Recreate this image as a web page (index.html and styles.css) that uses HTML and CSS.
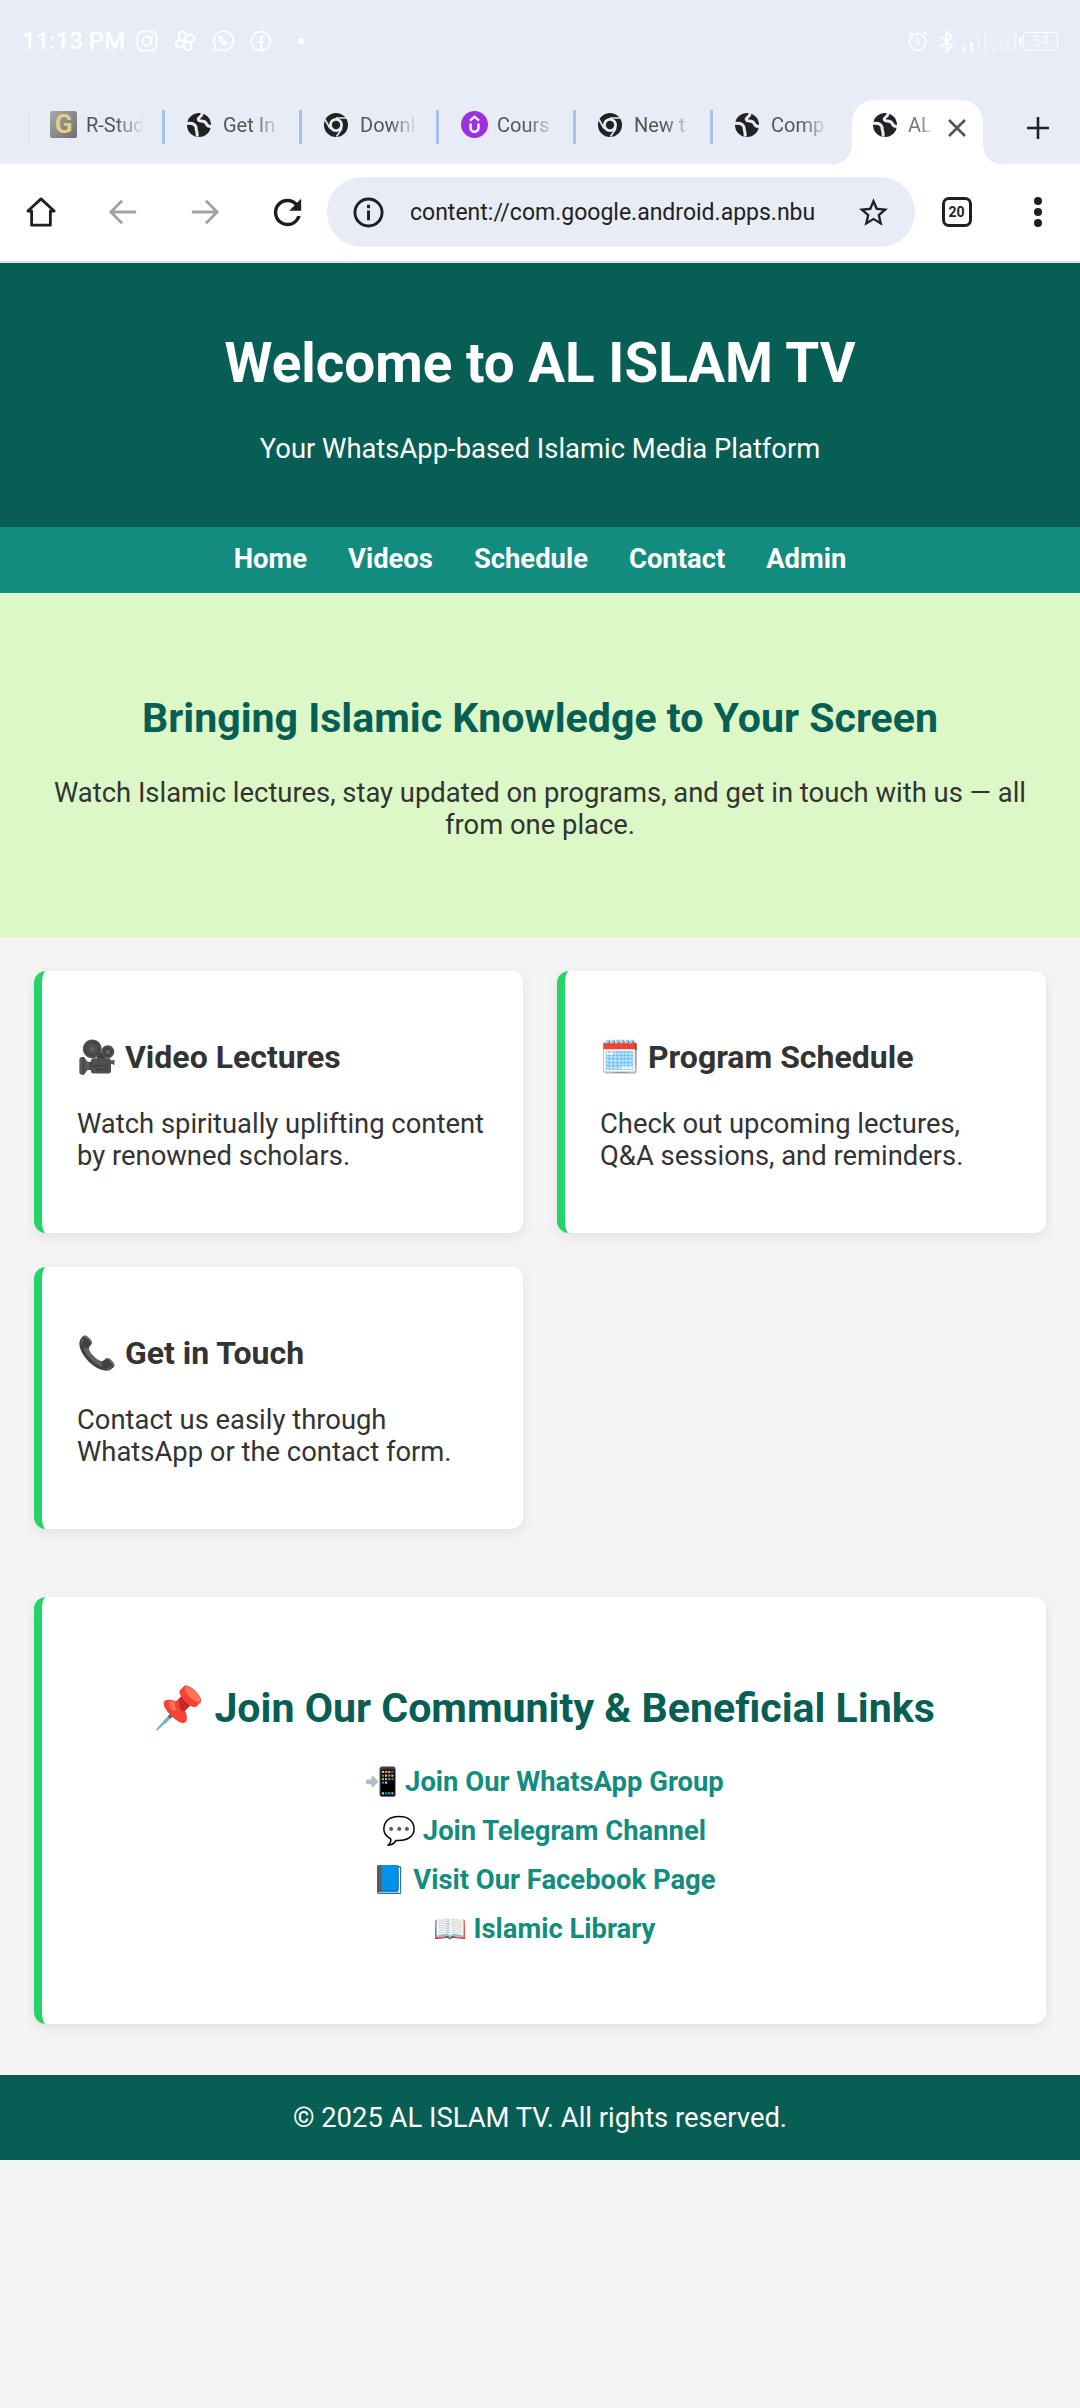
FILE: index.html
```html
<!DOCTYPE html>
<html lang="en">
<head>
  <meta charset="UTF-8">
  <title>AL ISLAM TV</title>
  <link rel="stylesheet" href="styles.css">
</head>
<body>
  <svg class="defs" width="0" height="0">
    <symbol id="globe" viewBox="0 0 24 24">
      <circle cx="12" cy="12" r="12" fill="#222"/>
      <path fill="none" stroke="#e8ecf6" stroke-width="3" d="M0 10.500c4-.8 7 .2 8.500 2.500 1.200 2 .2 2.500 1 4.500.5 1.500 1 3 .5 6M15 0c.5 2.500-1.500 3.500-3 4.800-1.500 1.400-.5 3.200 2 3.200 3 0 4.800 1 5.500 3 .6 1.800 1.500 2.500 4.500 2.500"/>
    </symbol>
    <symbol id="chrome" viewBox="0 0 24 24">
      <circle cx="12" cy="12" r="12" fill="#222"/>
      <circle cx="12" cy="12" r="7" fill="#e8ecf6"/>
      <circle cx="12" cy="12" r="4.200" fill="#222"/>
      <path d="M12 5h10.500M6 15.500L1 6.500M18 15.500l-5.500 8" stroke="#e8ecf6" stroke-width="1.600" fill="none"/>
    </symbol>
  </svg>

  <div class="statusbar">
    <div class="status-group">
      <span class="time">11:13 PM</span>
      <svg class="status-icon" viewBox="0 0 24 24" fill="none" stroke="#fff" stroke-width="1.800"><rect x="1.500" y="1.500" width="21" height="21" rx="5.500"/><circle cx="12" cy="12" r="5"/><circle cx="18" cy="6" r="1" fill="#fff" stroke="none"/></svg>
      <svg class="status-icon" viewBox="0 0 24 24" fill="none" stroke="#fff" stroke-width="2.200"><path d="M12 12C8 12 5 10 5 6.500 5 3 8 1 10.500 2c2.500 1 3 5 1.500 10zM12 12c0-4 2-7 5.500-7C21 5 23 8 22 10.500c-1 2.500-5 3-10 1.500zM12 12c4 0 7 2 7 5.500 0 3.500-3 5.500-5.500 4.500-2.500-1-3-5-1.500-10zM12 12c0 4-2 7-5.500 7C3 19 1 16 2 13.500c1-2.500 5-3 10-1.500z"/></svg>
      <svg class="status-icon" viewBox="0 0 24 24" fill="none" stroke="#fff" stroke-width="1.800"><path d="M2 22.500l1.600-5.600A10.500 10.500 0 1 1 7.500 20.800z"/><path stroke-width="2" d="M8.500 7.500c-1 1-.8 3 1.200 5.300 2 2.200 4.200 3.400 5.800 2.500l1-1.300-2.200-1.500-1 .8c-1.200-.5-2.300-1.600-2.900-3l.9-.9-1-2.300z"/></svg>
      <svg class="status-icon" viewBox="0 0 24 24" fill="none" stroke="#fff" stroke-width="1.800"><circle cx="12" cy="12" r="10.500"/><path stroke-width="2.200" d="M16 7h-1.500c-1.500 0-2.300.9-2.300 2.300V22M9 13h6"/></svg>
      <span class="status-dot"></span>
    </div>
    <div class="status-group status-right">
      <svg class="status-icon alarm" viewBox="0 0 24 24" fill="none" stroke="#fff" stroke-width="1.800"><circle cx="12" cy="13" r="9"/><path d="M12 8v5.500l3 2M2 5l4-3M22 5l-4-3"/></svg>
      <svg class="bt" viewBox="0 0 16 24" fill="none" stroke="#fff" stroke-width="2"><path d="M2 6.500l12 10.500-6 5.500V1.500l6 5.500L2 17.500"/></svg>
      <div class="signal">
        <span class="bar b1 on"></span><span class="bar b2 on"></span><span class="bar b3"></span><span class="bar b4"></span>
      </div>
      <div class="signal second">
        <span class="bar b1"></span><span class="bar b2"></span><span class="bar b3"></span><span class="bar b4"></span>
      </div>
      <div class="battery"><span>54</span></div>
    </div>
  </div>

  <div class="tabstrip">
    <div class="tab first">
      <span class="fav-g">G</span>
      <span class="tab-title">R-Stud</span>
    </div>
    <div class="tab">
      <svg class="fav"><use href="#globe"/></svg>
      <span class="tab-title">Get In</span>
    </div>
    <div class="tab">
      <svg class="fav"><use href="#chrome"/></svg>
      <span class="tab-title">Downl</span>
    </div>
    <div class="tab">
      <svg class="fav fav-u" viewBox="0 0 24 24">
        <circle cx="12" cy="12" r="12" fill="#9b30e0"/>
        <path d="M8 8.500L12 5l4 3.500" fill="none" stroke="#fff" stroke-width="2"/>
        <path d="M8.500 11v4a3.500 3.500 0 0 0 7 0v-4" fill="none" stroke="#fff" stroke-width="2.200"/>
      </svg>
      <span class="tab-title">Cours</span>
    </div>
    <div class="tab">
      <svg class="fav"><use href="#chrome"/></svg>
      <span class="tab-title">New t</span>
    </div>
    <div class="tab last">
      <svg class="fav"><use href="#globe"/></svg>
      <span class="tab-title">Comp</span>
    </div>
    <div class="tab active">
      <svg class="fav"><use href="#globe"/></svg>
      <span class="tab-title">AL</span>
      <svg class="tab-close" viewBox="0 0 18 18" fill="none" stroke="#555" stroke-width="2.600"><path d="M1 1l16 16M17 1L1 17"/></svg>
    </div>
    <svg class="tab-plus" viewBox="0 0 22 22" fill="none" stroke="#222" stroke-width="2.600"><path d="M11 0v22M0 11h22"/></svg>
  </div>

  <div class="toolbar">
    <div class="tool">
      <svg class="tool-icon" viewBox="0 0 32 32" fill="none" stroke="#1f1f1f" stroke-width="3" stroke-linejoin="round"><path d="M16 2L30 15h-4v15H6V15H2z"/></svg>
    </div>
    <div class="tool">
      <svg class="tool-icon" viewBox="0 0 32 32" fill="none" stroke="#a3a3a3" stroke-width="3"><path d="M30 16H4M15 4L3 16l12 12"/></svg>
    </div>
    <div class="tool">
      <svg class="tool-icon" viewBox="0 0 32 32" fill="none" stroke="#a3a3a3" stroke-width="3"><path d="M2 16h26M17 4l12 12-12 12"/></svg>
    </div>
    <div class="tool">
      <svg class="tool-icon reload" viewBox="3.500 3.500 17 17" fill="#1f1f1f"><path d="M17.650 6.350A7.958 7.958 0 0 0 12 4c-4.420 0-7.990 3.580-7.990 8s3.570 8 7.990 8c3.730 0 6.840-2.550 7.730-6h-2.080A5.990 5.990 0 0 1 12 18c-3.310 0-6-2.690-6-6s2.690-6 6-6c1.660 0 3.140.690 4.220 1.780L13 11h7V4l-2.350 2.350z"/></svg>
    </div>
    <div class="omnibox">
      <svg class="info" viewBox="0 0 32 32" fill="none" stroke="#1f1f1f" stroke-width="3"><circle cx="16" cy="16" r="14"/><path d="M16 14v10M16 8v3.500"/></svg>
      <span class="url">content://com.google.android.apps.nbu</span>
      <svg class="star" viewBox="2 2 20 19" fill="#1f1f1f"><path d="M22 9.240l-7.190-.620L12 2 9.190 8.630 2 9.240l5.460 4.730L5.820 21 12 17.270 18.180 21l-1.630-7.030L22 9.240zM12 15.400l-3.760 2.270 1-4.280-3.320-2.880 4.380-.380L12 6.100l1.710 4.040 4.380.380-3.320 2.880 1 4.280L12 15.400z"/></svg>
    </div>
    <div class="tool tool-right"><span class="tab-count">20</span></div>
    <div class="tool tool-right">
      <div class="menu-dots"><span></span><span></span><span></span></div>
    </div>
  </div>

  <header class="site-header">
    <h1>Welcome to AL ISLAM TV</h1>
    <p>Your WhatsApp-based Islamic Media Platform</p>
  </header>
  <nav class="site-nav">
    <a>Home</a><a>Videos</a><a>Schedule</a><a>Contact</a><a>Admin</a>
  </nav>
  <section class="hero">
    <h2>Bringing Islamic Knowledge to Your Screen</h2>
    <p>Watch Islamic lectures, stay updated on programs, and get in touch with us — all from one place.</p>
  </section>
  <section class="cards">
    <div class="card"><h3>🎥 Video Lectures</h3><p>Watch spiritually uplifting content by renowned scholars.</p></div>
    <div class="card"><h3>🗓️ Program Schedule</h3><p>Check out upcoming lectures, Q&amp;A sessions, and reminders.</p></div>
    <div class="card"><h3>📞 Get in Touch</h3><p>Contact us easily through WhatsApp or the contact form.</p></div>
  </section>
  <section class="community">
    <h2>📌 Join Our Community &amp; Beneficial Links</h2>
    <ul>
      <li>📲 <a>Join Our WhatsApp Group</a></li>
      <li>💬 <a>Join Telegram Channel</a></li>
      <li>📘 <a>Visit Our Facebook Page</a></li>
      <li>📖 <a>Islamic Library</a></li>
    </ul>
  </section>
  <footer class="site-footer">© 2025 AL ISLAM TV. All rights reserved.</footer>
</body>
</html>
```

FILE: styles.css
```css
* {
  box-sizing: border-box;
}

body {
  margin: 0;
  min-height: 2408px;
  background: #f4f4f4;
  font-family: Roboto, sans-serif;
  font-size: 27.4px;
  color: #333;
}

.defs {
  display: block;
  height: 0;
}

/* phone status bar */
.statusbar {
  height: 84px;
  background: #e8ecf6;
  padding: 30px 22px 0;
  display: flex;
  justify-content: space-between;
  align-items: flex-start;
  color: #fff;
}

.status-group {
  display: flex;
  align-items: center;
  height: 22px;
}

.time {
  font-size: 24px;
  font-weight: 500;
  width: 114px;
}

.status-icon {
  width: 22px;
  height: 22px;
  margin-right: 16px;
}

.status-dot {
  width: 6px;
  height: 6px;
  margin-left: 10px;
  border-radius: 50%;
  background: #fff;
}

.alarm {
  width: 23px;
  margin-right: 10px;
}

.bt {
  width: 15px;
  height: 23px;
  margin-right: 9px;
}

.signal {
  display: flex;
  align-items: flex-end;
  gap: 3.5px;
  height: 19px;
  margin-right: 5px;
}

.signal.second {
  margin-right: 6.5px;
}

.bar {
  width: 3.5px;
  background: rgba(255, 255, 255, 0.3);
}

.bar.on {
  background: #fff;
}

.b1 { height: 4px; }
.b2 { height: 9px; }
.b3 { height: 15px; }
.b4 { height: 19px; }

.battery {
  width: 35px;
  height: 19px;
  border: 1.5px solid #fff;
  border-radius: 3px;
  display: flex;
  justify-content: center;
  align-items: center;
  font-size: 15px;
  position: relative;
}

.battery span {
  opacity: 0.7;
}

.battery::before {
  content: "";
  position: absolute;
  left: -5px;
  top: 4px;
  width: 3px;
  height: 8px;
  background: #fff;
  border-radius: 1px;
}

/* browser tabs */
.tabstrip {
  height: 80px;
  background: #e8ecf6;
  display: flex;
  align-items: flex-start;
  padding: 16px 0 0 28px;
}

.tab {
  width: 137px;
  height: 65px;
  display: flex;
  align-items: flex-start;
  gap: 9px;
  padding: 13px 0 0 22px;
  font-size: 20px;
  color: #555;
  position: relative;
}

.tab::after {
  content: "";
  position: absolute;
  right: 0;
  top: 10px;
  width: 3px;
  height: 34px;
  background: #a9c3e8;
}

.tab.last::after {
  display: none;
}

.tab.first::before {
  content: "";
  position: absolute;
  left: 0;
  top: 10px;
  width: 2px;
  height: 34px;
  background: #e0e6f2;
}

.fav {
  width: 24px;
  height: 24px;
  flex: none;
  margin: 0 3px 0 0;
}

.fav-u {
  width: 27px;
  height: 27px;
  margin: -2px 0 0;
}

.fav-g {
  width: 27px;
  height: 27px;
  flex: none;
  margin-top: -2px;
  background: linear-gradient(135deg, #a8a8a8, #6f6f6f);
  border-radius: 2px;
  color: #e3cf8a;
  font-size: 26px;
  font-weight: 700;
  line-height: 27px;
  text-align: center;
}

.tab-title {
  width: 60px;
  white-space: nowrap;
  line-height: 24px;
  -webkit-mask-image: linear-gradient(to right, #000 50%, transparent 96%);
  mask-image: linear-gradient(to right, #000 50%, transparent 96%);
}

.tab.active {
  width: 131px;
  margin-left: 2px;
  padding-left: 21px;
  background: #fff;
  border-radius: 22px 22px 0 0;
  gap: 11px;
}

.tab.active .fav {
  margin-right: 0;
}

.tab.active .tab-title {
  width: 26px;
  color: #777;
}

.tab-close {
  width: 18px;
  height: 18px;
  margin: 6px 0 0 3px;
  flex: none;
}

/* the little curves either side of the active tab */
.tab.active::before,
.tab.active::after {
  content: "";
  display: block;
  position: absolute;
  top: auto;
  bottom: 0;
  width: 20px;
  height: 20px;
  background: radial-gradient(circle at 0 0, #e8ecf6 19.5px, #fff 20px);
}

.tab.active::before {
  left: -20px;
}

.tab.active::after {
  right: -20px;
  background: radial-gradient(circle at 100% 0, #e8ecf6 19.5px, #fff 20px);
}

.tab-plus {
  width: 22px;
  height: 22px;
  margin: 17px 0 0 44px;
  flex: none;
}

/* browser toolbar */
.toolbar {
  height: 99px;
  background: #fff;
  border-bottom: 2px solid #dce5ea;
  display: flex;
  align-items: center;
  padding-bottom: 1px;
}

.tool {
  width: 82px;
  height: 70px;
  display: flex;
  justify-content: center;
  align-items: center;
  flex: none;
}

.tool-right {
  width: 81px;
}

.tool-icon {
  width: 30px;
  height: 30px;
}

.reload {
  width: 29px;
  height: 29px;
}

.omnibox {
  width: 588px;
  height: 70px;
  margin-left: -1px;
  margin-right: 1px;
  border-radius: 35px;
  background: #e8ecf6;
  display: flex;
  align-items: center;
  padding-left: 26px;
  flex: none;
  color: #222;
}

.info {
  width: 31px;
  height: 31px;
  margin-right: 26px;
}

.url {
  font-size: 23px;
  white-space: nowrap;
}

.star {
  width: 29px;
  height: 28px;
  margin-left: 44px;
}

.tab-count {
  width: 30px;
  height: 30px;
  border: 3px solid #1f1f1f;
  border-radius: 7px;
  display: flex;
  justify-content: center;
  align-items: center;
  font-size: 14px;
  font-weight: 700;
  color: #222;
}

.menu-dots {
  display: flex;
  flex-direction: column;
  gap: 3px;
}

.menu-dots span {
  width: 8px;
  height: 8px;
  border-radius: 50%;
  background: #1f1f1f;
}

/* site */
.site-header {
  height: 264px;
  background: #075e54;
  color: #fff;
  text-align: center;
  padding-top: 68px;
}

.site-header h1 {
  margin: 0;
  font-size: 54.8px;
  line-height: 64px;
}

.site-header p {
  margin: 38px 0 0;
  line-height: 32px;
}

.site-nav {
  height: 66px;
  background: #128c7e;
  display: flex;
  justify-content: center;
  align-items: center;
  gap: 41px;
  padding-bottom: 2px;
}

.site-nav a {
  color: #fff;
  font-weight: 700;
}

.hero {
  height: 344px;
  background: #dcf8c6;
  text-align: center;
  padding: 101px 40px 0;
}

.hero h2 {
  margin: 0;
  color: #075e54;
  font-size: 41.1px;
  line-height: 48px;
}

.hero p {
  margin: 35px 0 0;
  line-height: 32px;
}

.cards {
  display: grid;
  grid-template-columns: 1fr 1fr;
  gap: 34px;
  padding: 34px;
}

.card {
  height: 262px;
  background: #fff;
  border-left: 8px solid #25d366;
  border-radius: 12px;
  padding: 68px 34px 0 35px;
  box-shadow: 0 4px 12px rgba(0, 0, 0, 0.08);
}

.card h3 {
  margin: 0;
  font-size: 32px;
  line-height: 37px;
}

.card p {
  margin: 32px 0 0;
  line-height: 32px;
}

.community {
  height: 427px;
  margin: 34px 34px 51px;
  background: #fff;
  border-left: 8px solid #25d366;
  border-radius: 12px;
  text-align: center;
  padding-top: 87px;
  box-shadow: 0 4px 12px rgba(0, 0, 0, 0.08);
}

.community h2 {
  margin: 0;
  color: #075e54;
  font-size: 41.1px;
  line-height: 48px;
}

.community ul {
  list-style: none;
  margin: 26px 0 0;
  padding: 0;
  line-height: 49px;
}

.community a {
  color: #128c7e;
  font-weight: 700;
}

.site-footer {
  height: 85px;
  background: #075e54;
  color: #fff;
  display: flex;
  justify-content: center;
  align-items: center;
}
```
